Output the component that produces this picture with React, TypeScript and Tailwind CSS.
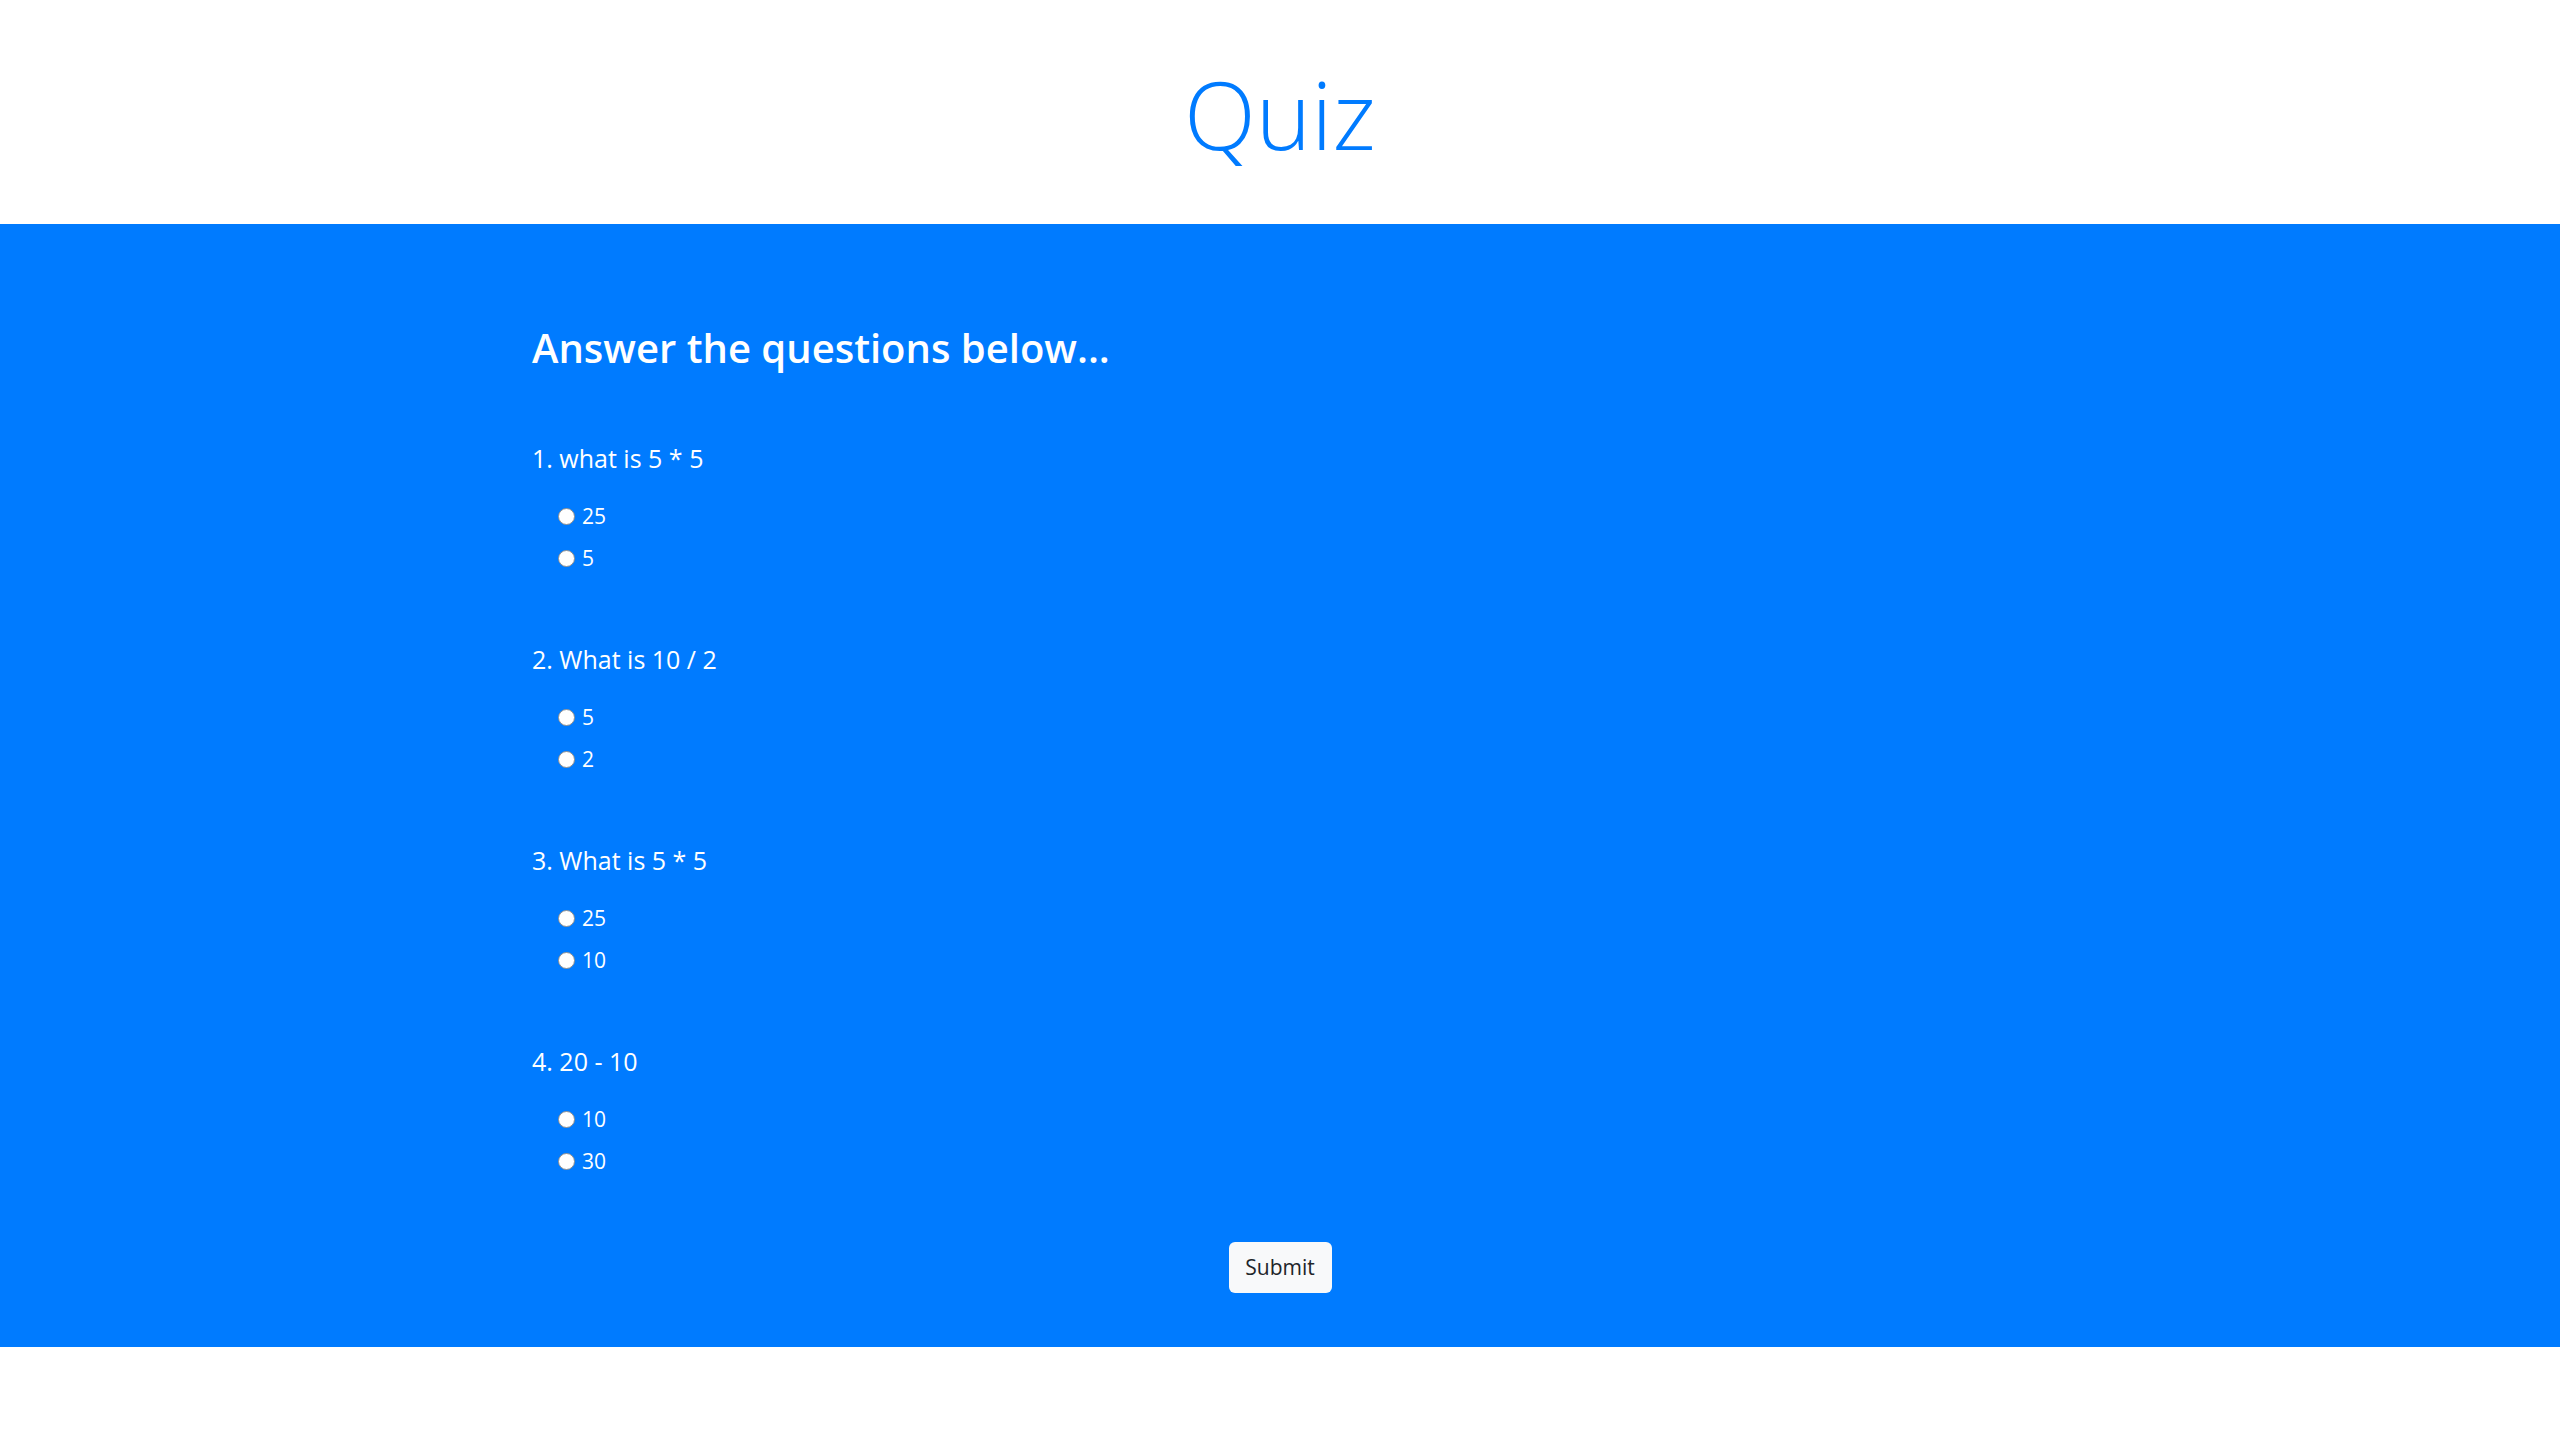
const questions = [
  { q: "1. what is 5 * 5", options: ["25", "5"] },
  { q: "2. What is 10 / 2", options: ["5", "2"] },
  { q: "3. What is 5 * 5", options: ["25", "10"] },
  { q: "4. 20 - 10", options: ["10", "30"] },
];

export default function App() {
  return (
    <div className="min-h-screen bg-white font-['Open_Sans',sans-serif]">
      {/* Header */}
      <header className="flex h-[224px] items-center justify-center">
        <h1 className="pt-[4px] text-[94px] font-light leading-none text-[#007bff]">Quiz</h1>
      </header>

      {/* Quiz */}
      <section className="bg-[#007bff] pb-[54px] pt-[98px] text-white">
        <div className="mx-auto w-[1496px]">
          <h2 className="text-[40px] font-semibold leading-[52px]">Answer the questions below...</h2>

          <div className="mt-[67px] flex flex-col gap-[63px]">
            {questions.map((item) => (
              <div key={item.q}>
                <h5 className="pt-[2px] text-[25px] leading-[30px]">{item.q}</h5>
                <div className="mt-[22px] flex flex-col pl-[26px]">
                  {item.options.map((o) => (
                    <label key={o} className="flex h-[42px] items-center gap-[7px] text-[21px]">
                      <span className="h-[17px] w-[17px] rounded-full border border-[#8f8f8f] bg-white" />
                      <span className="pt-[1px]">{o}</span>
                    </label>
                  ))}
                </div>
              </div>
            ))}
          </div>

          <div className="mt-[60px] flex justify-center">
            <button className="h-[51px] w-[103px] rounded-[6px] bg-[#f8f9fa] text-[21px] text-[#212529]">
              Submit
            </button>
          </div>
        </div>
      </section>
    </div>
  );
}
